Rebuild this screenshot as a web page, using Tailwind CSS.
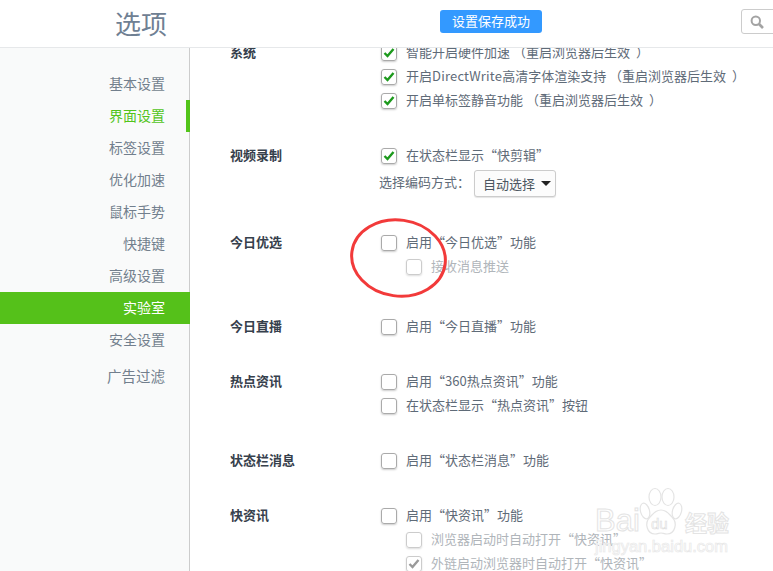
<!DOCTYPE html>
<html lang="zh-CN">
<head>
    <meta charset="UTF-8">
    <title>选项</title>
    <script src="https://cdn.jsdelivr.net/npm/@tailwindcss/browser@4"></script>
</head>
<body class="relative w-[773px] h-[571px] overflow-hidden bg-white font-['Noto_Sans_CJK_SC','Open_Sans',sans-serif] text-[13px] leading-[24px] text-[#5f6b78] [text-spacing-trim:space-all]">
    <!-- 顶部 -->
    <header class="relative h-[48px] border-b border-[#e6e8ea] flex">
        <h1 class="w-[190px] shrink-0 pl-[115px] pt-[1px] text-[26px] leading-[44px] font-normal text-[#6f8093]">选项</h1>
        <div class="w-[102px] shrink-0 h-[23px] ml-[250px] mt-[10px] rounded-[3px] bg-[#3399ff] text-white text-center text-[13px] leading-[22px]">设置保存成功</div>
        <div class="w-[40px] shrink-0 h-[25px] ml-[199px] mt-[9px] rounded-l-[3px] border border-[#ccc] flex items-center pl-[8px]">
            <svg width="14" height="14" viewBox="0 0 14 14" fill="none" stroke="#a3a3a3" stroke-width="2"><circle cx="5.8" cy="5.8" r="4.2"/><path d="M9 9l4 4" stroke-width="2.6"/></svg>
        </div>
    </header>

    <div class="flex h-[523px]">
        <!-- 侧边栏 -->
        <nav class="w-[190px] shrink-0 border-r border-[#cccccc] bg-[#f9fafa] pt-[20px] text-right text-[14px] leading-[30px] text-[#727f8d]">
            <div class="h-[32px] pr-[24px]">基本设置</div>
            <div class="h-[32px] pr-[21px] text-[#52c41a] border-r-[4px] border-[#52c41a] -mr-px">界面设置</div>
            <div class="h-[32px] pr-[24px]">标签设置</div>
            <div class="h-[32px] pr-[24px]">优化加速</div>
            <div class="h-[32px] pr-[24px]">鼠标手势</div>
            <div class="h-[32px] pr-[24px]">快捷键</div>
            <div class="h-[32px] pr-[24px]">高级设置</div>
            <div class="h-[32px] pr-[25px] -mr-px bg-[#55c11a] text-white">实验室</div>
            <div class="h-[32px] pr-[24px]">安全设置</div>
            <div class="h-[32px] pr-[24px] mt-[5px] text-[14.5px]">广告过滤</div>
        </nav>

        <!-- 内容 -->
        <main class="flex-1 overflow-hidden pl-[40px]">
            <div class="-mt-[8px]">
                <section class="flex">
                    <h2 class="w-[151px] font-bold text-[#36404c]">系统</h2>
                    <div>
                        <label class="flex items-center"><span class="w-[16px] h-[16px] mt-[2px] mr-[9px] rounded-[3px] border border-[#aaa] shadow-[0_1px_2px_#ccc] flex items-center justify-center"><svg width="12" height="10" viewBox="0 0 12 10" fill="none" stroke="#1d9a1d" stroke-width="2.4"><path d="M1.5 5l3 3 6-7"/></svg></span><span>智能开启硬件加速 （重启浏览器后生效<span class="ml-[6px]">）</span></span></label>
                        <label class="flex items-center"><span class="w-[16px] h-[16px] mt-[2px] mr-[9px] rounded-[3px] border border-[#aaa] shadow-[0_1px_2px_#ccc] flex items-center justify-center"><svg width="12" height="10" viewBox="0 0 12 10" fill="none" stroke="#1d9a1d" stroke-width="2.4"><path d="M1.5 5l3 3 6-7"/></svg></span><span>开启<span class="tracking-[0.2px]">DirectWrite</span>高清字体渲染支持 （重启浏览器后生效<span class="ml-[6px]">）</span></span></label>
                        <label class="flex items-center"><span class="w-[16px] h-[16px] mt-[2px] mr-[9px] rounded-[3px] border border-[#aaa] shadow-[0_1px_2px_#ccc] flex items-center justify-center"><svg width="12" height="10" viewBox="0 0 12 10" fill="none" stroke="#1d9a1d" stroke-width="2.4"><path d="M1.5 5l3 3 6-7"/></svg></span><span>开启单标签静音功能 （重启浏览器后生效<span class="ml-[6px]">）</span></span></label>
                    </div>
                </section>

                <section class="flex mt-[31px]">
                    <h2 class="w-[151px] font-bold text-[#36404c]">视频录制</h2>
                    <div>
                        <label class="flex items-center"><span class="w-[16px] h-[16px] mt-[2px] mr-[9px] rounded-[3px] border border-[#aaa] shadow-[0_1px_2px_#ccc] flex items-center justify-center"><svg width="12" height="10" viewBox="0 0 12 10" fill="none" stroke="#1d9a1d" stroke-width="2.4"><path d="M1.5 5l3 3 6-7"/></svg></span>在状态栏显示“快剪辑”</label>
                        <div class="flex items-center h-[32px] -ml-[2px]">
                            <span class="w-[95px] -mt-[3px]">选择编码方式：</span>
                            <span class="w-[82px] h-[27px] rounded-[3px] border border-[#ccc] bg-[#fcfcfc] shadow-[0_1px_1px_#e5e5e5] flex items-center pl-[8px] text-[#4c5661] leading-[23px]">自动选择<span class="ml-[6px] w-0 h-0 border-x-[5px] border-t-[5px] border-x-transparent border-t-[#222]"></span></span>
                        </div>
                    </div>
                </section>

                <section class="flex mt-[31px]">
                    <h2 class="w-[151px] font-bold text-[#36404c]">今日优选</h2>
                    <div>
                        <label class="flex items-center"><span class="w-[16px] h-[16px] mt-[2px] mr-[9px] rounded-[3px] border border-[#aaa] shadow-[0_1px_2px_#ccc]"></span>启用“今日优选”功能</label>
                        <label class="flex items-center pl-[25px] text-[#b0b5ba]"><span class="w-[16px] h-[16px] mt-[2px] mr-[9px] rounded-[3px] border border-[#ccc] shadow-[0_1px_2px_#ddd]"></span>接收消息推送</label>
                    </div>
                </section>

                <section class="flex mt-[36px]">
                    <h2 class="w-[151px] font-bold text-[#36404c]">今日直播</h2>
                    <label class="flex items-center h-[24px]"><span class="w-[16px] h-[16px] mt-[2px] mr-[9px] rounded-[3px] border border-[#aaa] shadow-[0_1px_2px_#ccc]"></span>启用“今日直播”功能</label>
                </section>

                <section class="flex mt-[31px]">
                    <h2 class="w-[151px] font-bold text-[#36404c]">热点资讯</h2>
                    <div>
                        <label class="flex items-center"><span class="w-[16px] h-[16px] mt-[2px] mr-[9px] rounded-[3px] border border-[#aaa] shadow-[0_1px_2px_#ccc]"></span>启用“360热点资讯”功能</label>
                        <label class="flex items-center"><span class="w-[16px] h-[16px] mt-[2px] mr-[9px] rounded-[3px] border border-[#aaa] shadow-[0_1px_2px_#ccc]"></span>在状态栏显示“热点资讯”按钮</label>
                    </div>
                </section>

                <section class="flex mt-[31px]">
                    <h2 class="w-[151px] font-bold text-[#36404c]">状态栏消息</h2>
                    <label class="flex items-center h-[24px]"><span class="w-[16px] h-[16px] mt-[2px] mr-[9px] rounded-[3px] border border-[#aaa] shadow-[0_1px_2px_#ccc]"></span>启用“状态栏消息”功能</label>
                </section>

                <section class="flex mt-[31px]">
                    <h2 class="w-[151px] font-bold text-[#36404c]">快资讯</h2>
                    <div>
                        <label class="flex items-center"><span class="w-[16px] h-[16px] mt-[2px] mr-[9px] rounded-[3px] border border-[#aaa] shadow-[0_1px_2px_#ccc]"></span>启用“快资讯”功能</label>
                        <label class="flex items-center pl-[25px] text-[#b0b5ba]"><span class="w-[16px] h-[16px] mt-[2px] mr-[9px] rounded-[3px] border border-[#ccc] shadow-[0_1px_2px_#ddd]"></span>浏览器启动时自动打开“快资讯”</label>
                        <label class="flex items-center pl-[25px] text-[#b0b5ba]"><span class="w-[16px] h-[16px] mt-[2px] mr-[9px] rounded-[3px] border border-[#ccc] shadow-[0_1px_2px_#ddd] flex items-center justify-center"><svg width="12" height="10" viewBox="0 0 12 10" fill="none" stroke="#9a9a9a" stroke-width="2.4"><path d="M1.5 5l3 3 6-7"/></svg></span>外链启动浏览器时自动打开“快资讯”</label>
                    </div>
                </section>
            </div>
        </main>
    </div>

    <!-- 红圈标注 -->
    <svg class="absolute left-[346px] top-[214px]" width="106" height="88" viewBox="0 0 106 88" fill="none">
        <ellipse cx="52.5" cy="44" rx="47" ry="38" stroke="#f23a3a" stroke-width="3" transform="rotate(8 52.5 44)"/>
    </svg>

    <!-- 百度经验水印 -->
    <div class="absolute left-[590px] top-[486px] w-[150px] h-[72px] pointer-events-none">
        <svg class="absolute left-[49px] top-[1px]" width="44" height="50" viewBox="0 0 44 50" fill="#fff" stroke="#e4e4e4" stroke-width="1.2">
            <ellipse cx="6" cy="24" rx="4.5" ry="8" transform="rotate(-15 6 24)"/>
            <ellipse cx="16" cy="10" rx="6" ry="8.5"/>
            <ellipse cx="29" cy="10" rx="6" ry="8.5"/>
            <ellipse cx="38" cy="24" rx="4.5" ry="8" transform="rotate(15 38 24)"/>
            <path d="M22 23c5 0 7 3 11 7 6 6 3 17-5 17-3 0-4-1-6-1s-3 1-6 1c-8 0-11-11-5-17 4-4 6-7 11-7z"/>
        </svg>
        <div class="absolute left-[5px] top-[17px] text-[31px] leading-[36px] font-['Liberation_Sans',sans-serif] text-white [-webkit-text-stroke:1px_#e4e4e4]">Bai</div>
        <div class="absolute left-[61px] top-[29px] text-[15px] leading-[18px] font-['Liberation_Sans',sans-serif] text-white [-webkit-text-stroke:0.6px_#dcdcdc]">du</div>
        <div class="absolute left-[95px] top-[21px] text-[22px] leading-[28px] font-bold text-white [-webkit-text-stroke:1px_#e4e4e4]">经验</div>
        <div class="absolute left-[5px] top-[50px] text-[16.5px] leading-[20px] font-['Liberation_Sans',sans-serif] text-white [-webkit-text-stroke:0.7px_#e8e8e8]">jingyan.baidu.com</div>
    </div>
</body>
</html>
